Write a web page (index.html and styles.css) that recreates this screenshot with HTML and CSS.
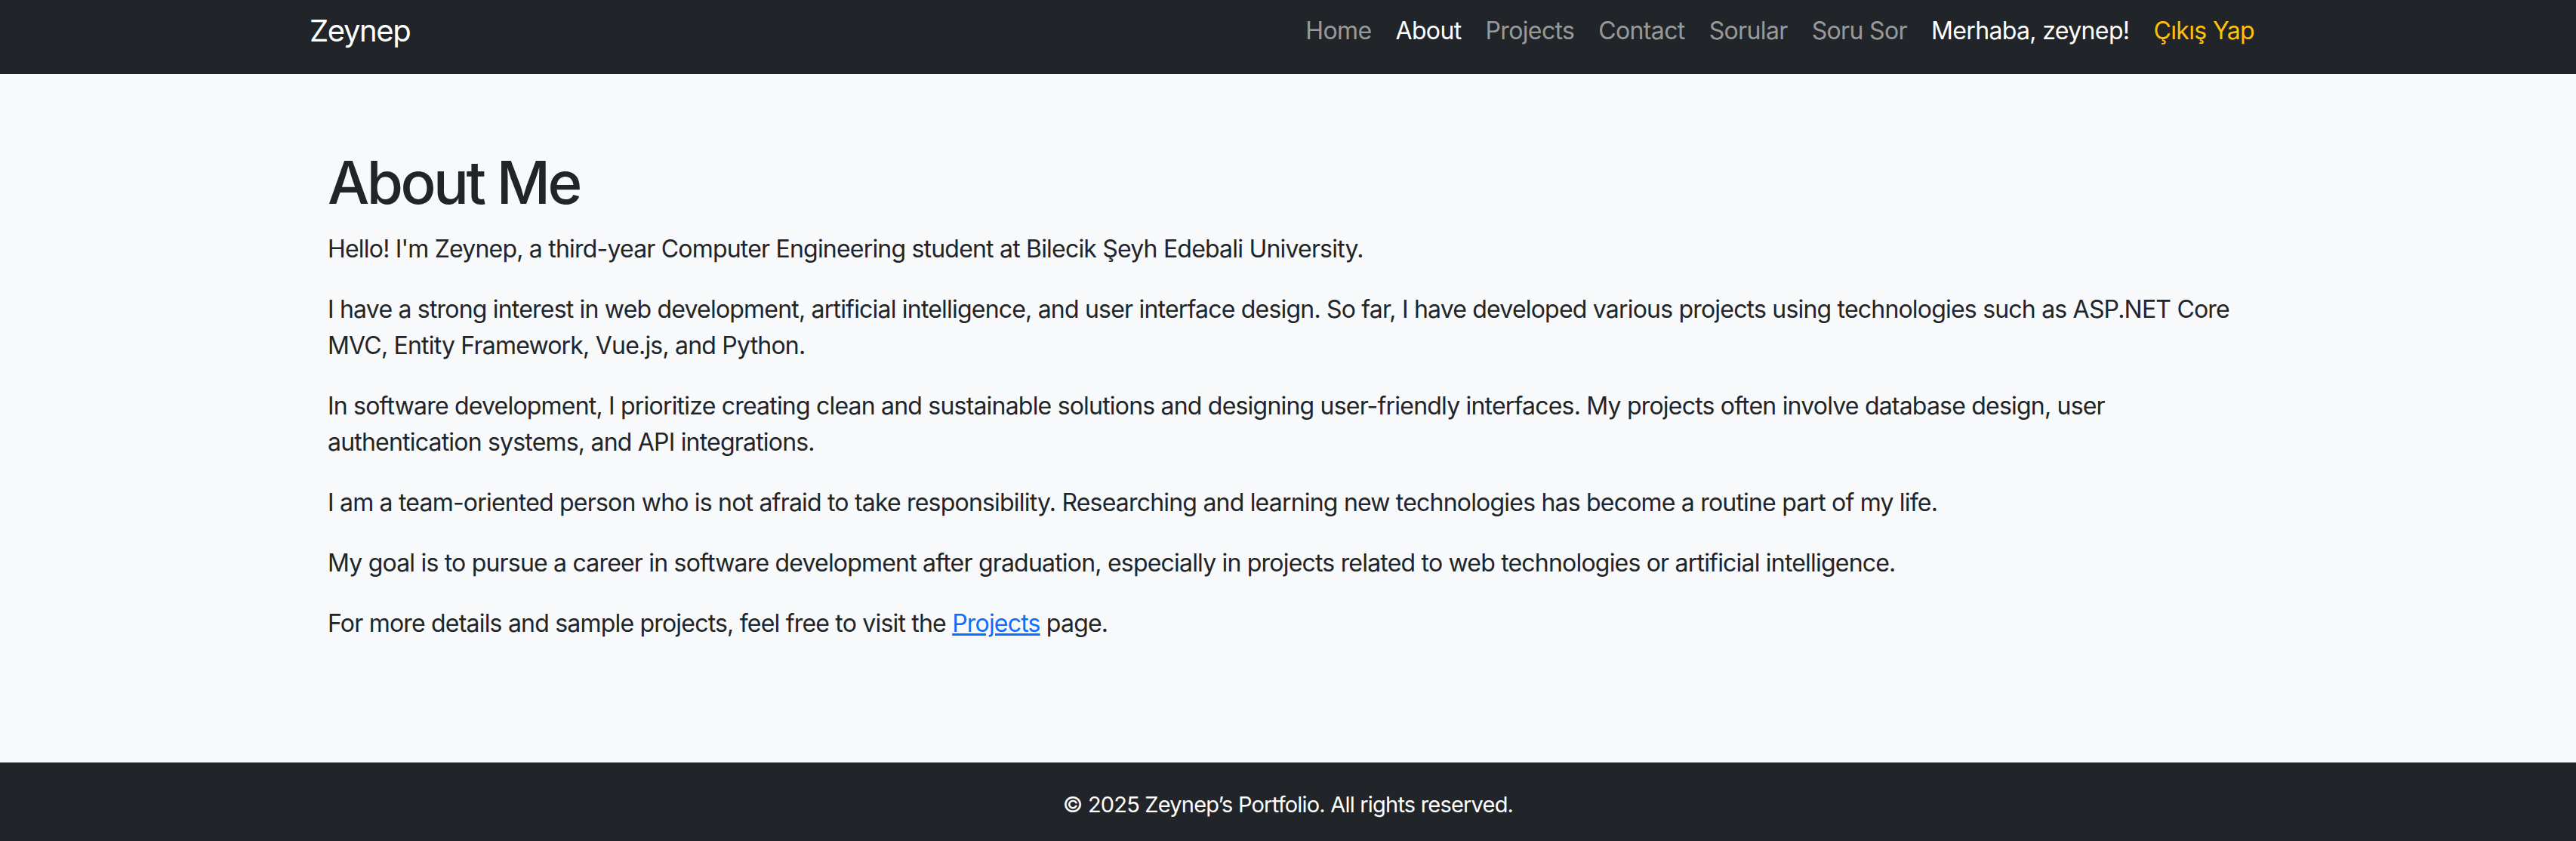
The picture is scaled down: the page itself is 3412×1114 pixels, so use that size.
FILE: index.html
```html
<!DOCTYPE html>
<html lang="en">
<head>
<meta charset="utf-8">
<title>About - Zeynep</title>
<link rel="stylesheet" href="styles.css">
</head>
<body>
<nav class="navbar">
  <div class="container nav-inner">
    <a class="brand" href="#">Zeynep</a>
    <ul class="nav-list">
      <li><a class="nav-link" href="#">Home</a></li>
      <li><a class="nav-link active" href="#">About</a></li>
      <li><a class="nav-link" href="#">Projects</a></li>
      <li><a class="nav-link" href="#">Contact</a></li>
      <li><a class="nav-link" href="#">Sorular</a></li>
      <li><a class="nav-link" href="#">Soru Sor</a></li>
      <li><span class="nav-link nav-user">Merhaba, zeynep!</span></li>
      <li><a class="nav-link nav-logout" href="#">Çıkış Yap</a></li>
    </ul>
  </div>
</nav>
<main class="container main">
  <div class="content">
    <h1 class="title">About Me</h1>
    <p class="para">Hello! I'm Zeynep, a third-year Computer Engineering student at Bilecik Şeyh Edebali University.</p>
    <p class="para">I have a strong interest in web development, artificial intelligence, and user interface design. So far, I have developed various projects using technologies such as ASP.NET Core MVC, Entity Framework, Vue.js, and Python.</p>
    <p class="para">In software development, I prioritize creating clean and sustainable solutions and designing user-friendly interfaces. My projects often involve database design, user authentication systems, and API integrations.</p>
    <p class="para">I am a team-oriented person who is not afraid to take responsibility. Researching and learning new technologies has become a routine part of my life.</p>
    <p class="para">My goal is to pursue a career in software development after graduation, especially in projects related to web technologies or artificial intelligence.</p>
    <p class="para">For more details and sample projects, feel free to visit the <a class="inline-link" href="#">Projects</a> page.</p>
  </div>
</main>
<footer class="footer">
  <p class="footer-text">© 2025 Zeynep’s Portfolio. All rights reserved.</p>
</footer>
</body>
</html>
```

FILE: styles.css
```css
html, body {
  margin: 0;
  padding: 0;
}
body {
  font-family: Inter, "Noto Sans", "Liberation Sans", sans-serif;
  font-size: 32px;
  line-height: 1.5;
  color: #212529;
  background: #f8f9fa;
  letter-spacing: -0.025em;
}
.container {
  max-width: 2640px;
  margin: 0 auto;
  padding: 0 24px;
  box-sizing: border-box;
}
.navbar {
  background: #212529;
  height: 98px;
  display: flex;
  align-items: center;
}
.nav-inner {
  width: 100%;
  display: flex;
  align-items: center;
  justify-content: space-between;
}
.brand {
  color: #fff;
  font-size: 40px;
  line-height: 60px;
  letter-spacing: -0.035em;
  text-decoration: none;
  margin-bottom: 16px;
}
.nav-list {
  list-style: none;
  margin: 0 0 16px;
  padding: 0;
  display: flex;
  align-items: center;
}
.nav-link {
  display: block;
  padding: 8px 16px;
  color: rgba(255, 255, 255, 0.55);
  text-decoration: none;
  line-height: 48px;
  letter-spacing: -0.02em;
}
.nav-link.active,
.nav-user {
  color: #fff;
}
.nav-logout {
  color: #ffc107;
}
.main {
  padding-top: 96px;
  padding-bottom: 128px;
}
.content {
  padding: 0 12px 0 24px;
}
.title {
  font-size: 78px;
  font-weight: 500;
  line-height: 96px;
  letter-spacing: -0.045em;
  margin: 0 0 16px;
}
.para {
  margin: 0 0 32px;
}
.inline-link {
  color: #0d6efd;
  text-decoration: underline;
}
.footer {
  background: #212529;
  color: #fff;
  text-align: center;
  padding: 32px 0;
}
.footer-text {
  margin: 0;
  font-size: 29px;
  line-height: 48px;
}
```
